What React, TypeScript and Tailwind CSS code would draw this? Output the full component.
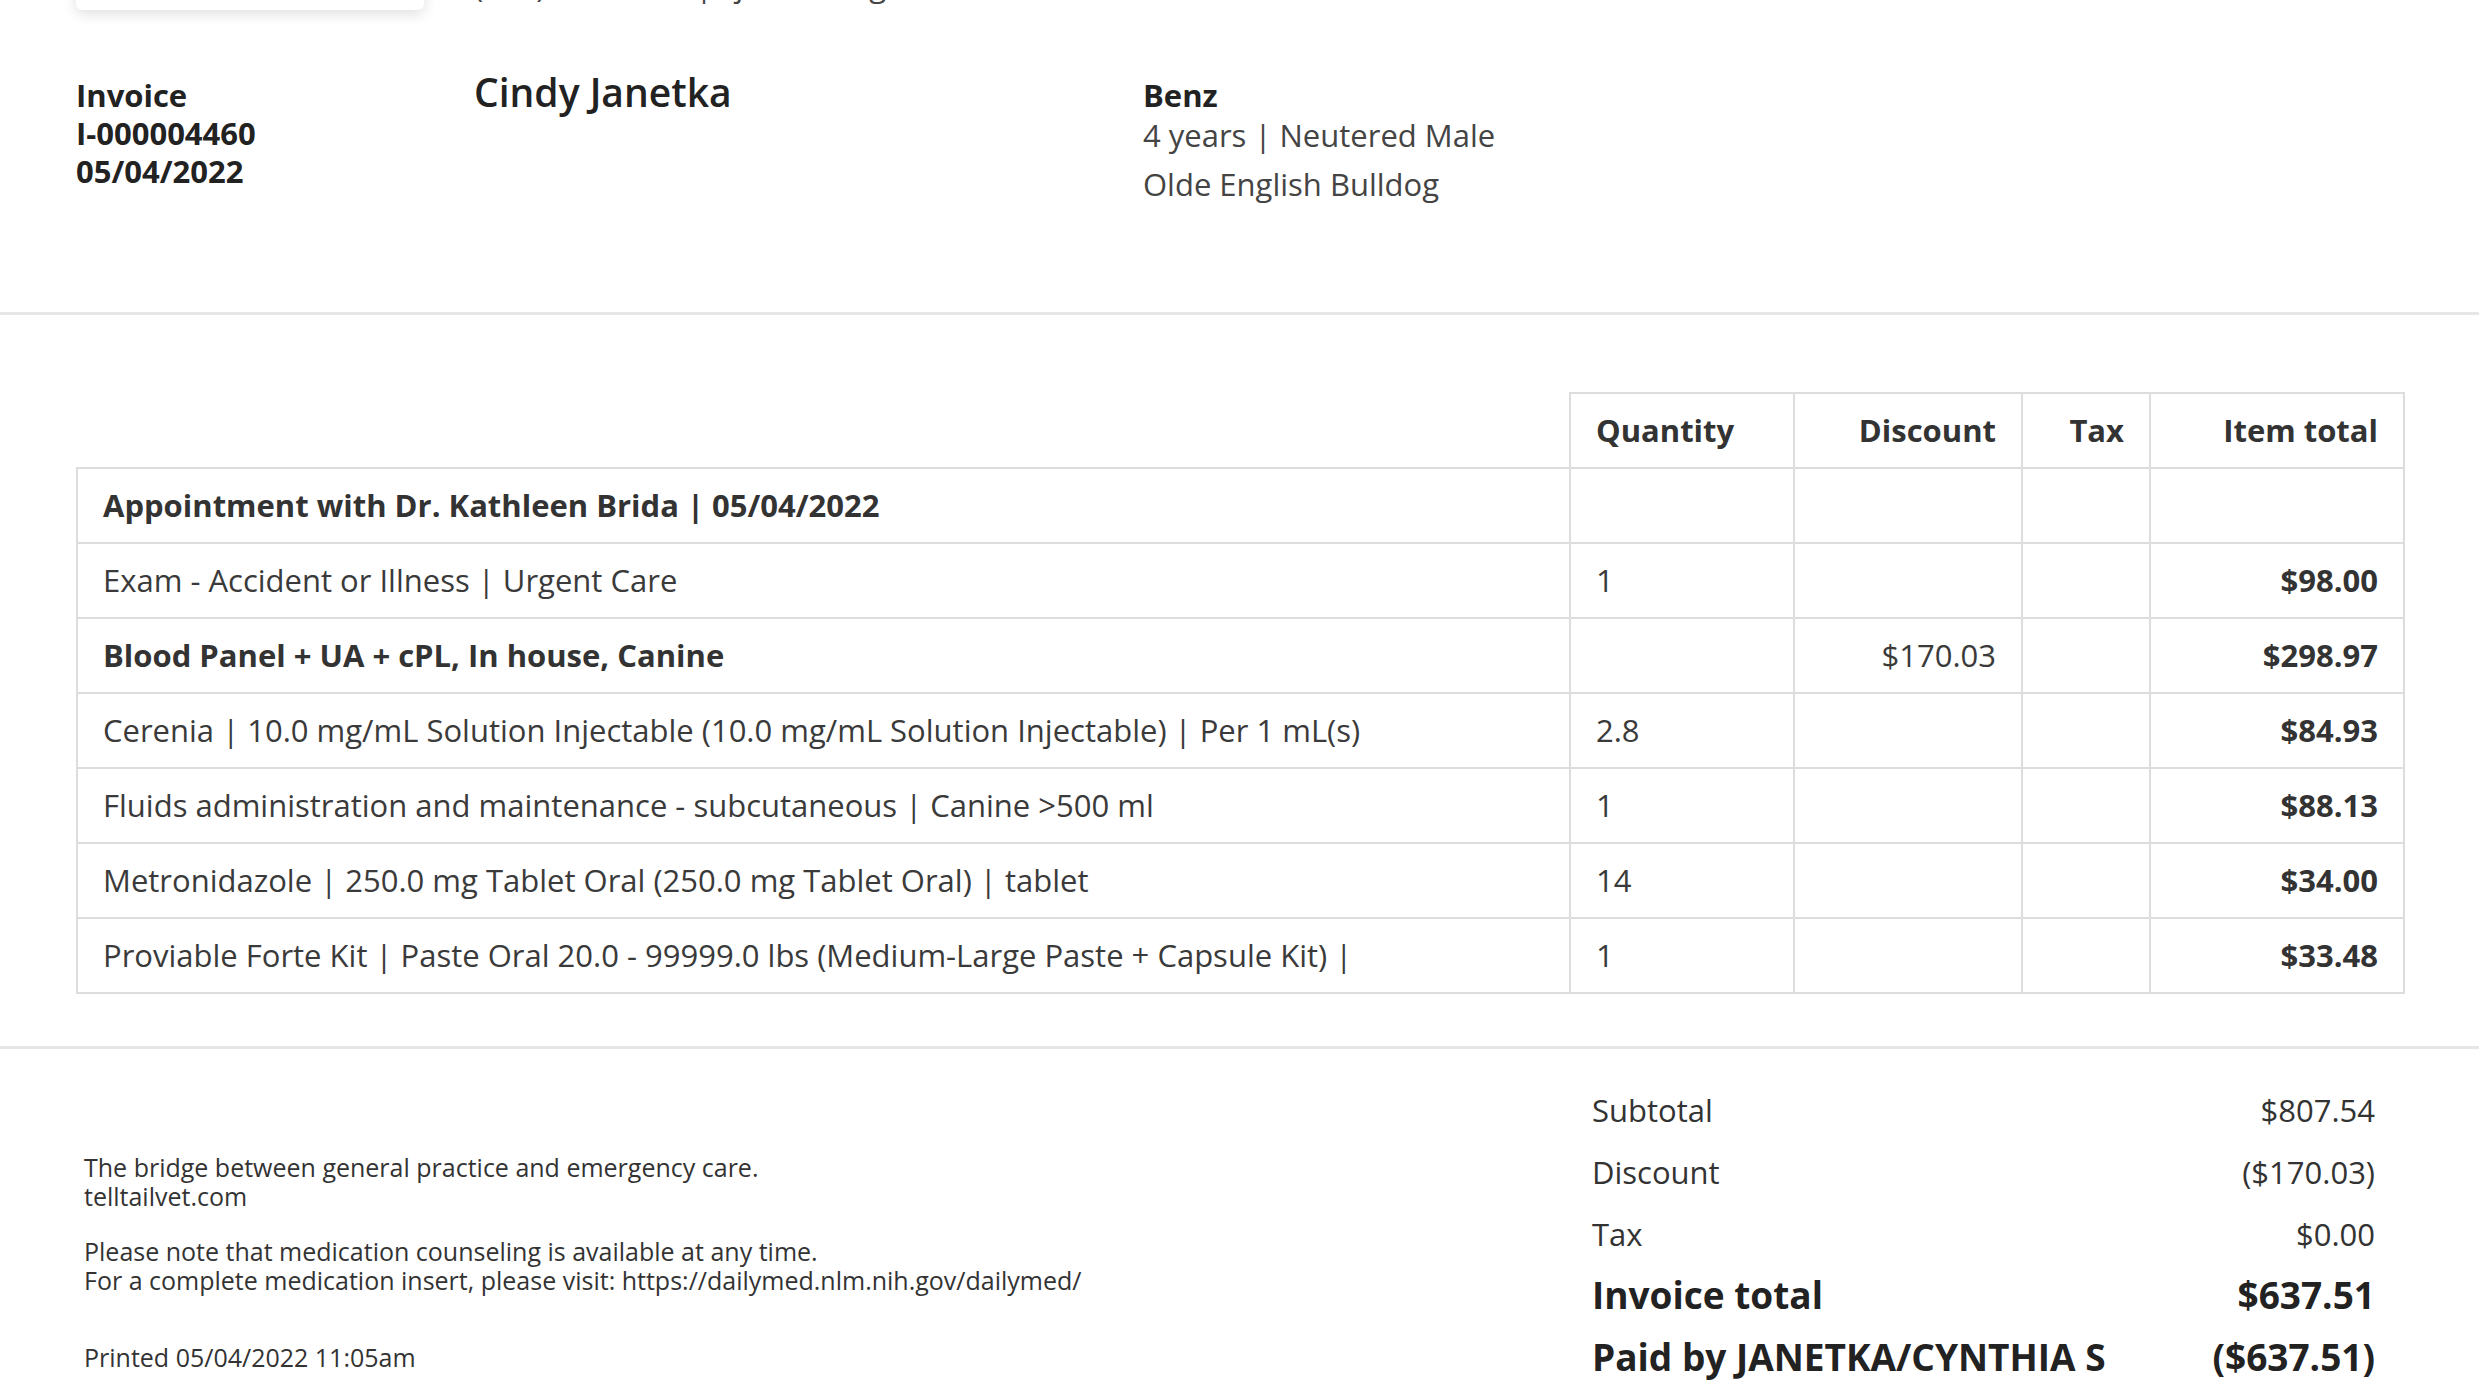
import React from 'react'

type Line = {
  description: string
  quantity?: string
  discount?: string
  total?: string
  bold?: boolean
}

const lines: Line[] = [
  { description: 'Appointment with Dr. Kathleen Brida | 05/04/2022', bold: true },
  { description: 'Exam - Accident or Illness | Urgent Care', quantity: '1', total: '$98.00' },
  { description: 'Blood Panel + UA + cPL, In house, Canine', discount: '$170.03', total: '$298.97', bold: true },
  {
    description: 'Cerenia | 10.0 mg/mL Solution Injectable (10.0 mg/mL Solution Injectable) | Per 1 mL(s)',
    quantity: '2.8',
    total: '$84.93'
  },
  { description: 'Fluids administration and maintenance - subcutaneous | Canine >500 ml', quantity: '1', total: '$88.13' },
  { description: 'Metronidazole | 250.0 mg Tablet Oral (250.0 mg Tablet Oral) | tablet', quantity: '14', total: '$34.00' },
  {
    description: 'Proviable Forte Kit | Paste Oral 20.0 - 99999.0 lbs (Medium-Large Paste + Capsule Kit) |',
    quantity: '1',
    total: '$33.48'
  }
]

const cell = 'border-2 border-[#dddddd] px-[25px] h-[75px] align-middle'

const App: React.FC = (): React.ReactElement => {
  return (
    <div className="min-h-screen bg-white text-[#333] font-['Open_Sans','Liberation_Sans',sans-serif] overflow-hidden">
      {/* header strip, scrolled mostly out of view */}
      <div className="-mt-[50px] flex items-end px-[76px] h-[60px]">
        <div className="w-[348px] h-[60px] rounded-md bg-white shadow-[0_4px_14px_rgba(0,0,0,0.13)]" />
        <div className="ml-[50px] pb-[6px] text-[31px] leading-[38px] text-[#444]">
          (630) 555-0142 | cjanetka@gmail.com
        </div>
      </div>

      {/* invoice / client / patient */}
      <div className="flex items-start px-[76px] mt-[66px]">
        <div className="w-[398px] text-[31px] leading-[38px] font-bold text-[#222]">
          <div>Invoice</div>
          <div>I-000004460</div>
          <div>05/04/2022</div>
        </div>
        <div className="w-[669px] text-[39px] leading-[32px] font-semibold text-[#222]">Cindy Janetka</div>
        <div className="text-[31px]">
          <div className="mt-[3px] leading-[32px] font-bold text-[#222]">Benz</div>
          <div className="leading-[49px] text-[#444]">4 years | Neutered Male</div>
          <div className="leading-[49px] text-[#444]">Olde English Bulldog</div>
        </div>
      </div>

      <div className="mt-[103px] h-[3px] bg-[#e6e6e6]" />

      {/* line items */}
      <div className="px-[76px] mt-[77px]">
        <table className="w-[2327px] table-fixed border-collapse text-[31px] text-[#3a3a3a]">
          <colgroup>
            <col className="w-[1493px]" />
            <col className="w-[224px]" />
            <col className="w-[228px]" />
            <col className="w-[128px]" />
            <col className="w-[254px]" />
          </colgroup>
          <thead>
            <tr className="font-bold text-[#333]">
              <th className="h-[75px]" />
              <th className={`${cell} text-left`}>Quantity</th>
              <th className={`${cell} text-right`}>Discount</th>
              <th className={`${cell} text-right`}>Tax</th>
              <th className={`${cell} text-right`}>Item total</th>
            </tr>
          </thead>
          <tbody>
            {lines.map((line) => (
              <tr key={line.description}>
                <td className={`${cell} text-left whitespace-nowrap ${line.bold ? 'font-bold text-[#333]' : ''}`}>
                  {line.description}
                </td>
                <td className={`${cell} text-left`}>{line.quantity}</td>
                <td className={`${cell} text-right`}>{line.discount}</td>
                <td className={`${cell} text-right`} />
                <td className={`${cell} text-right font-bold text-[#333]`}>{line.total}</td>
              </tr>
            ))}
          </tbody>
        </table>
      </div>

      <div className="mt-[52px] h-[3px] bg-[#e6e6e6]" />

      {/* footer */}
      <div className="flex items-start justify-between pl-[84px] pr-[104px]">
        <div className="mt-[104px] text-[25px] leading-[29px] text-[#333]">
          <div>The bridge between general practice and emergency care.</div>
          <div>telltailvet.com</div>
          <div className="mt-[26px]">Please note that medication counseling is available at any time.</div>
          <div>For a complete medication insert, please visit: https://dailymed.nlm.nih.gov/dailymed/</div>
          <div className="mt-[48px]">Printed 05/04/2022 11:05am</div>
        </div>

        <div className="mt-[30px] w-[783px] text-[31px] text-[#333]">
          <div className="flex justify-between leading-[62px]">
            <span>Subtotal</span>
            <span>$807.54</span>
          </div>
          <div className="flex justify-between leading-[62px]">
            <span>Discount</span>
            <span>($170.03)</span>
          </div>
          <div className="flex justify-between leading-[62px]">
            <span>Tax</span>
            <span>$0.00</span>
          </div>
          <div className="flex justify-between leading-[60px] text-[37px] font-bold text-[#222]">
            <span>Invoice total</span>
            <span>$637.51</span>
          </div>
          <div className="flex justify-between leading-[64px] text-[37px] font-bold text-[#222]">
            <span>Paid by JANETKA/CYNTHIA S</span>
            <span>($637.51)</span>
          </div>
          <div className="leading-[62px] text-[#444]">05/04/2022 | Credit card | Visa</div>
        </div>
      </div>
    </div>
  )
}

export default App
